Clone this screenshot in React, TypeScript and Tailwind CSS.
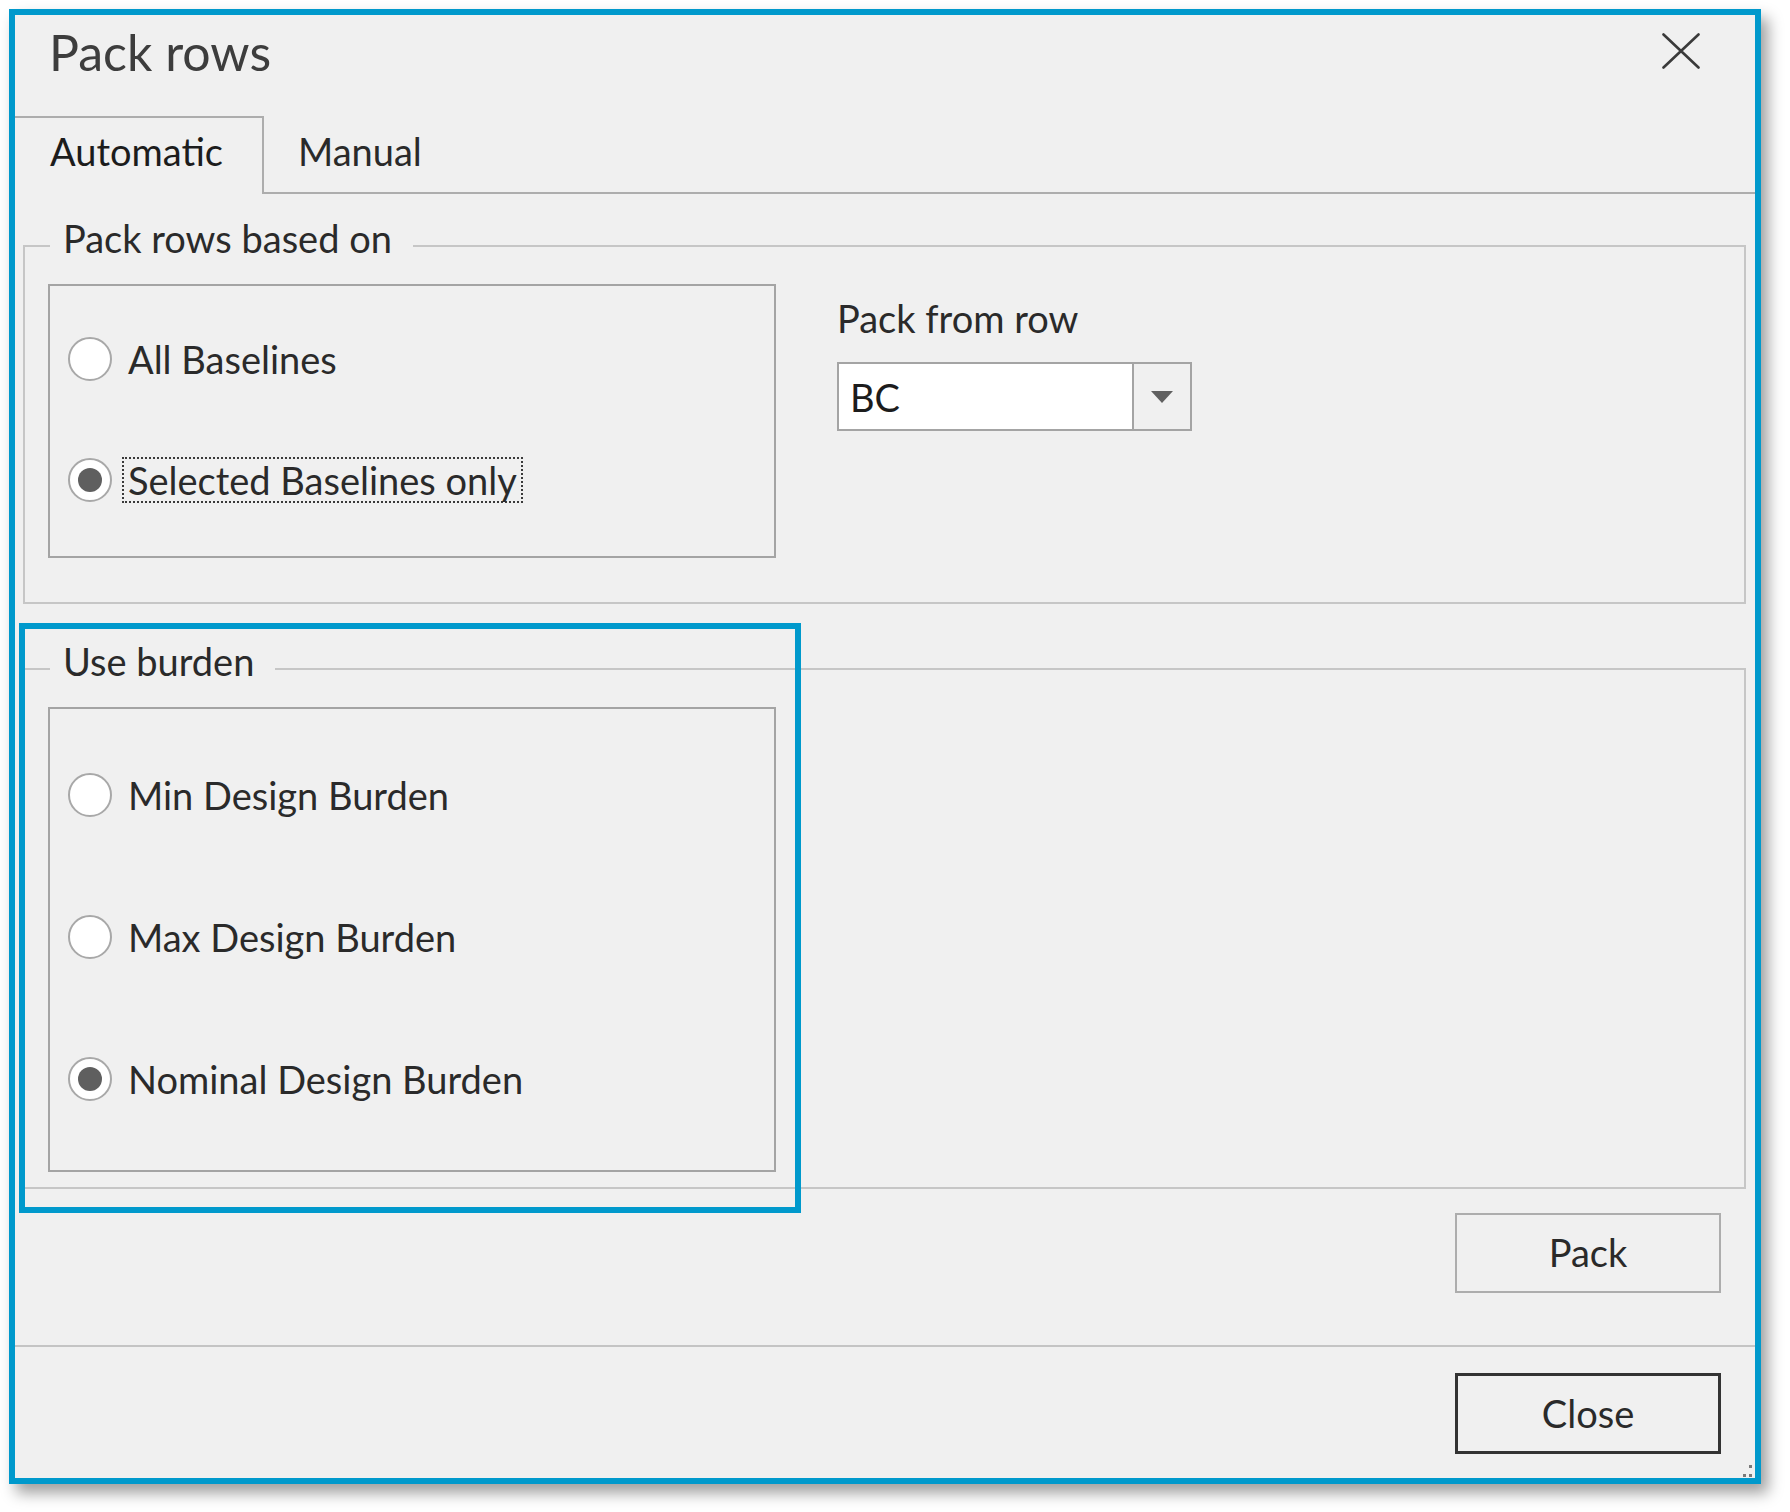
import React from "react";

function Radio({ checked }: { checked?: boolean }) {
  return (
    <span className="flex h-[44px] w-[44px] shrink-0 items-center justify-center rounded-full border-2 border-[#a8a8a8] bg-white">
      {checked && <span className="h-[24px] w-[24px] rounded-full bg-[#5f5f5f]" />}
    </span>
  );
}

function RadioRow({ label, checked, focus }: { label: string; checked?: boolean; focus?: boolean }) {
  return (
    <div className="flex h-[46px] items-center pl-[18px]">
      <Radio checked={checked} />
      {focus ? (
        <span className="ml-[10px] border-2 border-dotted border-[#3a3a3a] px-[4px] py-[2px] text-[38px] leading-none text-[#2a2a2a]">
          {label}
        </span>
      ) : (
        <span className="ml-[16px] text-[38px] leading-none text-[#2a2a2a]">{label}</span>
      )}
    </div>
  );
}

function GroupBox({
  legend,
  className,
  children,
}: {
  legend: string;
  className: string;
  children: React.ReactNode;
}) {
  return (
    <div className={`relative mx-[8px] mr-[9px] border-2 border-[#c6c6c6] ${className}`}>
      <span className="absolute left-[25px] top-[-28px] bg-[#f0f0f0] pl-[13px] pr-[21px] text-[38px] leading-none text-[#2a2a2a]">
        {legend}
      </span>
      {children}
    </div>
  );
}

export default function App() {
  return (
    <div className="min-h-[1512px] w-[1790px] bg-white pl-[9px] pt-[9px] font-[Lato,sans-serif]">
      <div className="relative flex h-[1475px] w-[1752px] flex-col border-[6px] border-[#0099cc] bg-[#f0f0f0] shadow-[7px_9px_14px_rgba(0,0,0,0.38)]">
        {/* Title row */}
        <div className="flex h-[101px] items-start justify-between">
          <div className="pl-[34px] pt-[12px] text-[50px] leading-none text-[#3d3d3d]">Pack rows</div>
          <svg className="mr-[55px] mt-[18px]" width="38" height="36" viewBox="0 0 38 36">
            <path d="M1.5 1.5 L36.5 34.5 M36.5 1.5 L1.5 34.5" stroke="#3a3a3a" strokeWidth="2.6" strokeLinecap="round" />
          </svg>
        </div>

        {/* Tabs */}
        <div className="flex h-[78px]">
          <div className="w-[249px] border-r-2 border-t-2 border-[#adadad] pl-[35px] pt-[14px] text-[38px] leading-none text-[#1c1c1c]">
            Automatic
          </div>
          <div className="flex-1 border-b-2 border-[#adadad] pl-[34px] pt-[16px] text-[38px] leading-none text-[#2a2a2a]">
            Manual
          </div>
        </div>

        {/* Group 1 */}
        <GroupBox legend="Pack rows based on" className="mt-[51px] h-[359px]">
          <div className="flex pl-[23px] pt-[37px]">
            <div className="flex h-[274px] w-[728px] flex-col gap-[75px] border-2 border-[#a4a4a4] pt-[50px]">
              <RadioRow label="All Baselines" />
              <RadioRow label="Selected Baselines only" checked focus />
            </div>
            <div className="ml-[61px] flex flex-col pt-[15px]">
              <div className="text-[38px] leading-none text-[#2a2a2a]">Pack from row</div>
              <div className="mt-[25px] flex h-[69px] w-[355px] border-2 border-[#a4a4a4]">
                <div className="flex flex-1 items-center bg-white pl-[11px] text-[38px] leading-none text-[#1c1c1c]">
                  BC
                </div>
                <div className="flex w-[58px] items-center justify-center border-l-2 border-[#a4a4a4] bg-[#f0f0f0]">
                  <svg width="22" height="12" viewBox="0 0 22 12">
                    <path d="M0 0 L22 0 L11 12 Z" fill="#606060" />
                  </svg>
                </div>
              </div>
            </div>
          </div>
        </GroupBox>

        {/* Group 2 */}
        <GroupBox legend="Use burden" className="mt-[64px] h-[521px]">
          <div className="pl-[23px] pt-[37px]">
            <div className="flex h-[465px] w-[728px] flex-col gap-[96px] border-2 border-[#a4a4a4] pt-[63px]">
              <RadioRow label="Min Design Burden" />
              <RadioRow label="Max Design Burden" />
              <RadioRow label="Nominal Design Burden" checked />
            </div>
          </div>
        </GroupBox>

        {/* Pack button */}
        <div className="mt-[24px] flex justify-end pr-[34px]">
          <button className="flex h-[80px] w-[266px] items-center justify-center border-2 border-[#adadad] bg-[#f0f0f0] pb-[2px] text-[38px] leading-none text-[#2a2a2a]">
            Pack
          </button>
        </div>

        {/* Separator */}
        <div className="mt-[52px] h-[2px] bg-[#c4c4c4]" />

        {/* Close button */}
        <div className="mt-[26px] flex justify-end pr-[34px]">
          <button className="flex h-[81px] w-[266px] items-center justify-center border-[3px] border-[#333333] bg-[#f0f0f0] pb-[2px] text-[38px] leading-none text-[#2a2a2a]">
            Close
          </button>
        </div>

        {/* Annotation highlight */}
        <div className="pointer-events-none absolute left-[4px] top-[608px] h-[590px] w-[782px] border-[6px] border-[#0099cc]" />

        {/* Resize grip */}
        <div className="absolute bottom-[1px] right-[3px] h-[12px] w-[12px]">
          <span className="absolute right-0 top-0 h-[3px] w-[3px] bg-[#7a7a7a]" />
          <span className="absolute bottom-0 right-0 h-[3px] w-[3px] bg-[#7a7a7a]" />
          <span className="absolute bottom-0 right-[6px] h-[3px] w-[3px] bg-[#7a7a7a]" />
        </div>
      </div>
    </div>
  );
}
